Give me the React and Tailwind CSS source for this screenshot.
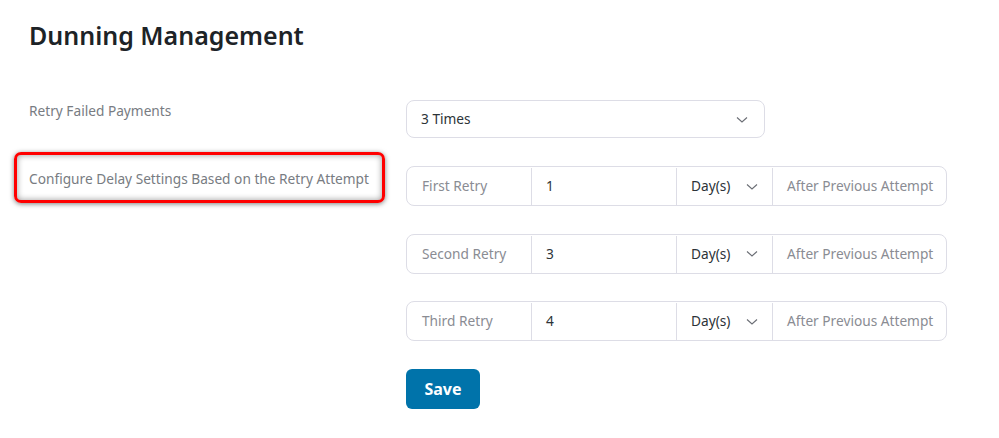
import React from 'react'

const Chevron = () => (
  <svg width="12" height="8" viewBox="0 0 12 8" fill="none" className="shrink-0">
    <polyline points="1,1.5 6,6 11,1.5" stroke="#6b6e75" strokeWidth="1.1" fill="none" />
  </svg>
)

const retries = [
  { label: 'First Retry', value: '1' },
  { label: 'Second Retry', value: '3' },
  { label: 'Third Retry', value: '4' },
]

const RetryRow = ({ label, value }) => (
  <div className="flex h-[40px] w-[541px] rounded-[8px] border border-[#dddde6] bg-white pt-px text-[13.7px]">
    <div className="flex w-[125px] items-center border-r border-[#dddde6] pl-[15px] text-[#8a8c93]">{label}</div>
    <div className="flex w-[145px] items-center border-r border-[#dddde6] pl-[14px] text-[#2c3338]">{value}</div>
    <div className="flex w-[96px] items-center justify-between border-r border-[#dddde6] pl-[14px] pr-[14px] text-[#2c3338]">
      <span>Day(s)</span>
      <Chevron />
    </div>
    <div className="flex flex-1 items-center pl-[14px] text-[#8a8c93]">After Previous Attempt</div>
  </div>
)

export default function App() {
  return (
    <div className="min-h-[438px] bg-white pl-[29px] pt-[17px] font-['Noto_Sans',sans-serif]">
      <h1 className="text-[25px] font-semibold leading-[36px] text-[#1d2327]">Dunning Management</h1>

      <div className="mt-[47px] grid grid-cols-[377px_1fr] gap-y-[28px]">
        <div className="pt-px text-[13.7px] leading-[20px] text-[#787c82]">Retry Failed Payments</div>
        <div className="flex h-[38px] w-[359px] items-center justify-between rounded-[8px] border border-[#dddde6] pl-[14px] pr-[16px] pt-px text-[13.7px] text-[#2c3338]">
          <span>3 Times</span>
          <Chevron />
        </div>

        <div className="relative mt-[3px] self-start text-[13.7px] leading-[20px] text-[#787c82]">
          <span className="pointer-events-none absolute left-[-15px] top-[-17px] h-[51px] w-[371px] rounded-[7px] border-[3px] border-[#ff0000] shadow-[0_1px_5px_rgba(0,0,0,0.5),inset_0_0_6px_rgba(0,0,0,0.4)]" />
          Configure Delay Settings Based on the Retry Attempt
        </div>
        <div className="flex flex-col gap-[27.5px]">
          {retries.map((r) => (
            <RetryRow key={r.label} {...r} />
          ))}
        </div>

        <div />
        <div>
          <button className="h-[40px] w-[74px] rounded-[6px] bg-[#0073aa] text-[16px] font-bold text-white">Save</button>
        </div>
      </div>
    </div>
  )
}
